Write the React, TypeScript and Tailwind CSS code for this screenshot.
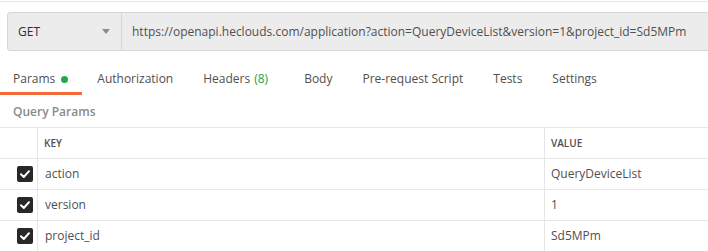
const tabs = [
  { label: 'Params', dot: true, pad: 'pl-[13px] pr-[14px]' },
  { label: 'Authorization', pad: 'px-[15px]' },
  { label: 'Headers', count: '(8)', pad: 'pl-[15px] pr-[21px]' },
  { label: 'Body', pad: 'px-[15px]' },
  { label: 'Pre-request Script', pad: 'px-[15px]' },
  { label: 'Tests', pad: 'px-[15px]' },
  { label: 'Settings', pad: 'px-[15px]' },
]

const params = [
  { key: 'action', value: 'QueryDeviceList' },
  { key: 'version', value: '1' },
  { key: 'project_id', value: 'Sd5MPm' },
]

function CheckBox() {
  return (
    <div className="flex h-[16px] w-[16px] items-center justify-center rounded-[2px] bg-[#282828]">
      <svg width="10" height="8" viewBox="0 0 10 8" fill="none">
        <path d="M1 4.2 L3.8 7 L9 1.2" stroke="#ffffff" strokeWidth="2" strokeLinecap="round" strokeLinejoin="round" />
      </svg>
    </div>
  )
}

export default function App() {
  return (
    <div className="h-[251px] w-[708px] overflow-hidden bg-white font-['Open_Sans',sans-serif] text-[12px] text-[#505050]">
      <div className="mt-px border-t border-[#e6e6e6]" />

      {/* request bar */}
      <div className="ml-[7px] mt-[10px] flex h-[39px] w-[720px] rounded-l-[3px] border border-[#d6d6d6] bg-[#ececec]">
        <div className="flex w-[114px] shrink-0 items-center justify-between border-r border-[#d6d6d6] pl-[10px] pr-[11px]">
          <span className="text-[#303030]">GET</span>
          <svg width="8" height="5" viewBox="0 0 8 5">
            <path d="M0 0 H8 L4 5 Z" fill="#8c8c8c" />
          </svg>
        </div>
        <div className="flex items-center whitespace-nowrap pl-[10px] text-[#505050]">
          https://openapi.heclouds.com/application?action=QueryDeviceList&amp;version=1&amp;project_id=Sd5MPm
        </div>
      </div>

      {/* tabs */}
      <div className="flex h-[44px]">
        {tabs.map((t, i) => (
          <div
            key={t.label}
            className={`flex items-center whitespace-nowrap border-b-[3px] pt-[19px] pb-[4px] leading-[18px] ${t.pad} ${
              i === 0 ? 'gap-[6px] border-[#f26b3a]' : 'border-transparent'
            }`}
          >
            <span className="whitespace-nowrap text-[#505050]">{t.label}</span>
            {t.count && <span className="ml-[4px] text-[#26a047]">{t.count}</span>}
            {t.dot && <span className="h-[7px] w-[7px] rounded-full bg-[#1fa84f]" />}
          </div>
        ))}
      </div>

      <div className="pl-[13px] pt-[8px] pb-[6px] text-[12px] font-semibold leading-[18px] text-[#8a8a8a]">
        Query Params
      </div>

      {/* params table */}
      <div className="border-t border-[#e6e6e6]">
        <div className="flex h-[31px] border-b border-[#e6e6e6]">
          <div className="w-[38px] border-r border-[#e6e6e6]" />
          <div className="flex w-[507px] items-center border-r border-[#e6e6e6] pl-[6px] text-[10px] font-semibold text-[#505050]">
            KEY
          </div>
          <div className="flex flex-1 items-center pl-[6px] text-[10px] font-semibold text-[#505050]">
            VALUE
          </div>
        </div>
        {params.map((p) => (
          <div key={p.key} className="flex h-[31px] border-b border-[#e6e6e6]">
            <div className="flex w-[38px] items-center justify-end border-r border-[#e6e6e6] pr-[4px]">
              <CheckBox />
            </div>
            <div className="flex w-[507px] items-center border-r border-[#e6e6e6] pl-[7px]">
              {p.key}
            </div>
            <div className="flex flex-1 items-center pl-[6px]">{p.value}</div>
          </div>
        ))}
      </div>
    </div>
  )
}
